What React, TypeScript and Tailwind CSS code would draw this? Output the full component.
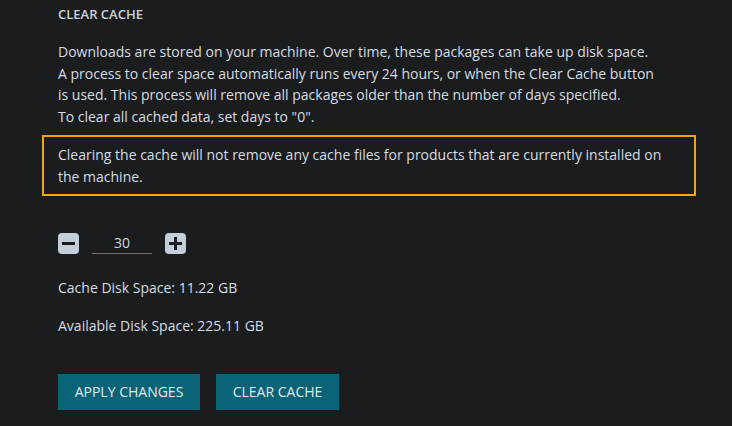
import React from 'react'

const StepButton = ({ plus }: { plus?: boolean }) => (
  <button className="relative flex h-[21px] w-[21px] items-center justify-center rounded-[4px] bg-[#c3ced9]">
    <span className="absolute h-[3px] w-[13px] bg-[#1b1c1e]" />
    {plus && <span className="absolute h-[13px] w-[3px] bg-[#1b1c1e]" />}
  </button>
)

export default function App() {
  return (
    <div
      className="min-h-[426px] w-full bg-[#1b1c1e] text-[#d5dde4]"
      style={{ fontFamily: '"Open Sans", sans-serif' }}
    >
      <div className="pl-[58px] pr-[36px] pt-[6px]">
        <h2 className="text-[13px] font-semibold leading-4 text-[#c8d3dc]">CLEAR CACHE</h2>
        <p className="mt-[19px] text-[14px] leading-[21.7px]">
          Downloads are stored on your machine. Over time, these packages can take up disk space.
          <br />
          A process to clear space automatically runs every 24 hours, or when the Clear Cache button
          <br />
          is used. This process will remove all packages older than the number of days specified.
          <br />
          To clear all cached data, set days to "0".
        </p>
        <div className="-ml-[16px] mt-[7px] border-2 border-[#f2a50c] pb-[6px] pl-[14px] pr-[14px] pt-[7px] text-[14px] leading-[22px]">
          Clearing the cache will not remove any cache files for products that are currently installed on the machine.
        </div>

        <div className="mt-[37px] flex items-center">
          <StepButton />
          <input
            readOnly
            value="30"
            className="ml-[13px] mr-[13px] h-[21px] w-[60px] border-b border-[#69737d] bg-transparent text-center text-[14px] text-[#c9d9e8] outline-none"
          />
          <StepButton plus />
        </div>

        <p className="mt-[23px] text-[14px] leading-[21px]">Cache Disk Space: 11.22 GB</p>
        <p className="mt-[17px] text-[14px] leading-[21px]">Available Disk Space: 225.11 GB</p>

        <div className="mt-[38px] flex gap-[16px]">
          <button className="h-[36px] w-[142px] bg-[#0a6477] text-[14px] text-[#e2e8ec]">APPLY CHANGES</button>
          <button className="h-[36px] w-[123px] bg-[#0a6477] text-[14px] text-[#e2e8ec]">CLEAR CACHE</button>
        </div>
      </div>
    </div>
  )
}
